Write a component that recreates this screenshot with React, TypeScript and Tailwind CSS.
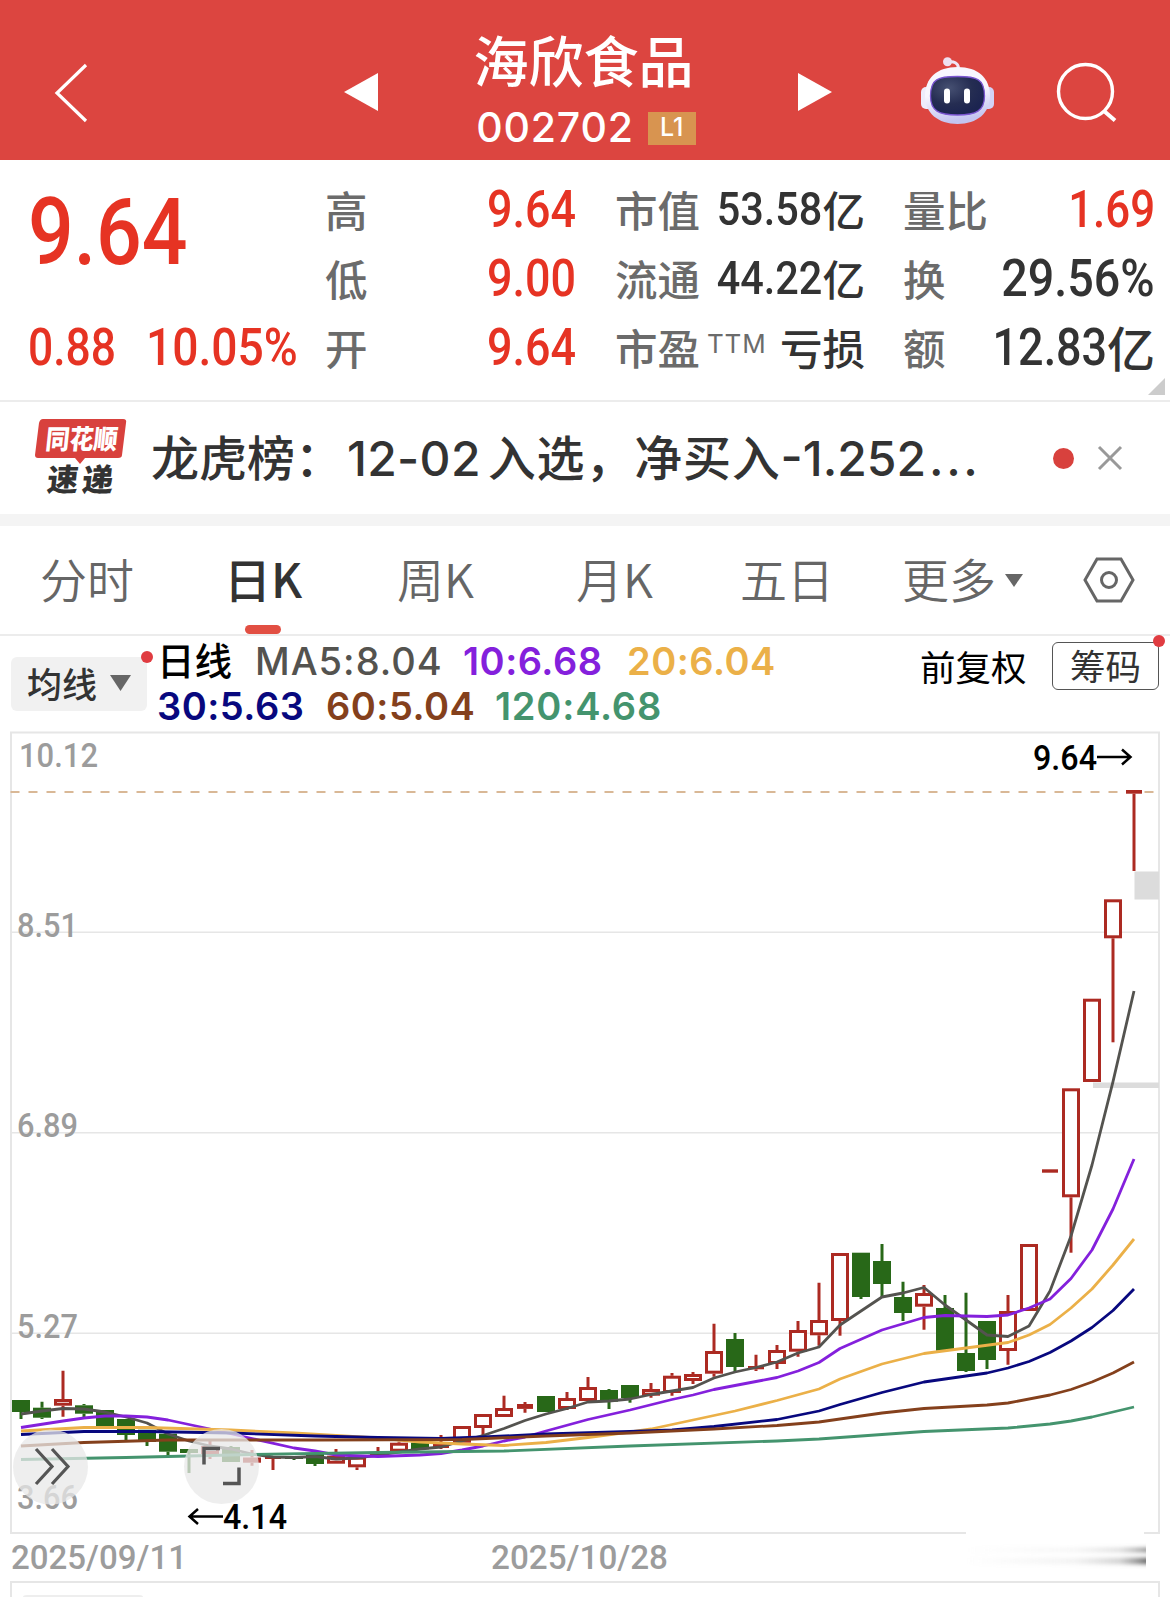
import type { ReactNode } from "react";

type Candle = [kind: "r" | "g", high: number, top: number, bottom: number, low: number];

const STEP = 21;

const candles: Candle[] = [
  ["g", 1400, 1400, 1412, 1419],
  ["g", 1401.7, 1407.7, 1417.7, 1419],
  ["r", 1370.7, 1399, 1405.7, 1416.7],
  ["g", 1404, 1405.3, 1413.7, 1417.7],
  ["g", 1410, 1410, 1429, 1429],
  ["g", 1419, 1419, 1435, 1440],
  ["g", 1429.7, 1429.7, 1442, 1446],
  ["g", 1433.7, 1433.7, 1451.7, 1455],
  ["g", 1449, 1449, 1453, 1473],
  ["r", 1441, 1446, 1454, 1459],
  ["g", 1446, 1447, 1462, 1462],
  ["r", 1450, 1457.5, 1462.7, 1465.7],
  ["r", 1456, 1456, 1459, 1470],
  ["g", 1456, 1456, 1459, 1460],
  ["g", 1454, 1454, 1464, 1466],
  ["r", 1449, 1455.7, 1463.7, 1463.7],
  ["r", 1456.7, 1456.7, 1467.3, 1470],
  ["r", 1447, 1452, 1455, 1455],
  ["r", 1441.7, 1442.7, 1451.7, 1451.7],
  ["g", 1442.7, 1442.7, 1449.3, 1449.3],
  ["r", 1435, 1444, 1448, 1449],
  ["r", 1426, 1426, 1442.7, 1442.7],
  ["r", 1414, 1414, 1428, 1435],
  ["r", 1395.7, 1408, 1417, 1417],
  ["r", 1402, 1404, 1408.9, 1412.7],
  ["g", 1396, 1396, 1412, 1412],
  ["r", 1392, 1398, 1409, 1410],
  ["r", 1377, 1387, 1401, 1401],
  ["g", 1389, 1390, 1401.7, 1409],
  ["g", 1385, 1385, 1398, 1402.7],
  ["r", 1383, 1389, 1395.7, 1397.7],
  ["r", 1373, 1375.7, 1393, 1395.7],
  ["r", 1372, 1374, 1381, 1384],
  ["r", 1323.7, 1351, 1373.7, 1376.7],
  ["g", 1333, 1339, 1367, 1371.7],
  ["r", 1354.7, 1366, 1369.3, 1371],
  ["r", 1345, 1350, 1364, 1369],
  ["r", 1321, 1330, 1351.7, 1356.7],
  ["r", 1282.7, 1320, 1335.3, 1345.7],
  ["r", 1253, 1253, 1321, 1335.7],
  ["g", 1252.7, 1252.7, 1297, 1299],
  ["g", 1244, 1261, 1284, 1297],
  ["g", 1281.7, 1297, 1313, 1321],
  ["r", 1285, 1293, 1306.7, 1329.7],
  ["g", 1295, 1308, 1350.7, 1350.7],
  ["g", 1292.7, 1353, 1371, 1372],
  ["g", 1321, 1321, 1360, 1369],
  ["r", 1295, 1311, 1351, 1364.7],
  ["r", 1244, 1244, 1311, 1311],
  ["r", 1169.3, 1169.3, 1172.7, 1172.7],
  ["r", 1088.3, 1088.3, 1197.3, 1252.7],
  ["r", 998.7, 998.7, 1082, 1082],
  ["r", 899.3, 899.3, 938.3, 1042.3],
  ["r", 790, 790, 793.7, 871],
];

const averages = [
  {
    color: "#54534f",
    points:
      "21,1414 42,1411 63,1408.5 84,1409 105,1412 126,1417 147,1423 168,1434 189,1441 210,1446 231,1449 252,1454 273,1457 294,1457.5 315,1456.5 336,1459 357,1458 378,1455 399,1452 420,1449 441,1447 462,1441 483,1435.5 504,1428.5 525,1420.5 546,1414 567,1408.5 588,1402 609,1401 630,1399 651,1394.5 672,1391 693,1387.5 714,1378 735,1372 756,1367.5 777,1362 798,1353 819,1347 840,1325 861,1311 882,1297 903,1293 924,1287.5 945,1305 966,1320 987,1335 1008,1336.5 1029,1326 1050,1291 1071,1236 1092,1165 1113,1081.7 1134,991",
  },
  {
    color: "#8420dc",
    points:
      "21,1427.5 63,1421 84,1418 105,1416 126,1416 147,1417 168,1420 210,1429 252,1438.5 294,1448 315,1451 336,1455 378,1456.5 420,1455 441,1453.5 462,1450 483,1446 504,1441 525,1437 546,1431 588,1419.5 630,1410 672,1399.5 693,1395 714,1389.5 756,1381.5 777,1377.5 798,1371 819,1362.5 840,1348.5 882,1330 924,1317.5 945,1315.5 987,1316.5 1008,1315 1029,1308 1050,1299 1071,1278.5 1092,1250 1113,1209 1134,1159",
  },
  {
    color: "#ebb048",
    points:
      "21,1431 84,1427.5 147,1427.5 231,1430 294,1433 378,1438 420,1442 462,1444 504,1445.5 546,1442.5 588,1437.5 630,1432 651,1429 693,1420 735,1411 777,1400.5 819,1389 840,1379 882,1364 924,1353.5 966,1348 1008,1342.5 1029,1335 1050,1324.5 1071,1308 1092,1289 1113,1265 1134,1239",
  },
  {
    color: "#08087e",
    points:
      "21,1434.5 84,1431.5 147,1431.5 231,1433 315,1436 378,1437.5 441,1438.5 483,1437 546,1434 630,1431.5 672,1430 714,1426.5 777,1419.5 819,1411 840,1404.5 882,1392.5 924,1382 966,1376 987,1373 1008,1368 1029,1361.5 1050,1352.5 1071,1341 1092,1327.5 1113,1310.5 1134,1289",
  },
  {
    color: "#84401c",
    points:
      "21,1446 84,1442.5 168,1440 315,1440 462,1439.5 546,1436 630,1433 714,1429 777,1425.5 819,1422 882,1413 924,1408.5 987,1405 1008,1403 1050,1395 1071,1389.5 1092,1382 1113,1373 1134,1362",
  },
  {
    color: "#44946e",
    points:
      "21,1459.5 126,1457.5 252,1454.5 378,1452.5 504,1451 630,1446 777,1441 819,1439 924,1431.5 1008,1428 1050,1424 1071,1421 1092,1417 1134,1407",
  },
];

// Roboto squeezed sideways, for the narrow quote digits
function Din({ className = "", children }: { className?: string; children: ReactNode }) {
  return (
    <span className={`inline-block whitespace-nowrap font-['Roboto','Noto_Sans_CJK_SC',sans-serif] font-medium ${className}`}>
      {children}
    </span>
  );
}

function Robot() {
  return (
    <svg width="75" height="72" viewBox="0 0 75 72" fill="none">
      <defs>
        <linearGradient id="shell" x1="0" y1="0" x2="0.2" y2="1">
          <stop offset="0.5" stopColor="#f8f6fe" />
          <stop offset="1" stopColor="#c3c4f0" />
        </linearGradient>
        <radialGradient id="face" cx="0.35" cy="0.3" r="0.7">
          <stop offset="0" stopColor="#465072" />
          <stop offset="0.6" stopColor="#252d52" />
          <stop offset="1" stopColor="#1c2450" />
        </radialGradient>
      </defs>
      <path d="M38.500 13C38 8 34 6 28 7" stroke="#efe5f6" strokeWidth="3" />
      <circle cx="27.500" cy="6.700" r="4.500" fill="#efe0f0" />
      <rect x="1" y="32" width="12" height="22" rx="5" fill="#eeecfb" />
      <rect x="62" y="32" width="12" height="22" rx="5" fill="#d3d2f6" />
      <path d="M37.500 12C58 12 70 23 70 41C70 58 57 69 37.500 69C18 69 5 58 5 41C5 23 17 12 37.500 12Z" fill="url(#shell)" />
      <path
        d="M37.500 21.500C57 21.500 64.500 24 64.500 41C64.500 56 56 60 37.500 60C19 60 10.500 56 10.500 41C10.500 24 18 21.500 37.500 21.500Z"
        fill="url(#face)"
        stroke="#7a55d0"
        strokeWidth="1.300"
      />
      <rect x="24" y="33.500" width="6" height="15" rx="3" fill="#fff" />
      <rect x="44" y="33.500" width="6" height="15" rx="3" fill="#fff" />
    </svg>
  );
}

function Header() {
  return (
    <header className="flex h-40 bg-[#dc4540] text-white">
      <div className="flex w-[340px] items-start pl-[54px] pt-[63px]">
        <svg width="34" height="60" viewBox="0 0 34 60" fill="none" stroke="#fff" strokeWidth="3.2">
          <path d="M32 2L3 30L32 58" />
        </svg>
      </div>
      <svg className="mt-[73px]" width="40" height="38" viewBox="0 0 40 38">
        <path d="M38 0V38L4 19Z" fill="#fff" />
      </svg>
      <div className="flex w-[412px] flex-col items-center pt-[18px]">
        <h1 className="mr-[5px] text-[55px] font-medium leading-[80px]">海欣食品</h1>
        <div className="mt-[3px] flex h-[52px] items-center gap-[14px]">
          <span className="font-['Inter',sans-serif] text-[41px] font-medium leading-[52px] tracking-[0.8px]">002702</span>
          <span className="mt-[2px] flex h-[33px] w-12 items-center justify-center bg-[#d89450] font-['Inter',sans-serif] text-[25px] font-medium">
            L1
          </span>
        </div>
      </div>
      <svg className="mt-[73px]" width="40" height="38" viewBox="0 0 40 38">
        <path d="M6 0V38L40 19Z" fill="#fff" />
      </svg>
      <div className="ml-[88px] mt-[55px]">
        <Robot />
      </div>
      <svg className="ml-[61px] mt-[61px]" width="62" height="62" viewBox="0 0 62 62" fill="none" stroke="#fff" strokeWidth="3.4">
        <circle cx="29.500" cy="30.500" r="27" />
        <path d="M48 50L59 59.500" strokeWidth="4" />
      </svg>
    </header>
  );
}

const quotes = [
  { a: "高", av: "9.64", b: "市值", bv: "53.58", unit: "亿", c: "量比", cv: "1.69", cu: "", cc: "scale-x-[0.86] text-[#e63323]" },
  { a: "低", av: "9.00", b: "流通", bv: "44.22", unit: "亿", c: "换", cv: "29.56%", cu: "", cc: "scale-x-[0.915]" },
  { a: "开", av: "9.64", b: "市盈", bv: "", unit: "亏损", c: "额", cv: "12.83", cu: "亿", cc: "scale-x-[0.88]" },
];

function QuotePanel() {
  return (
    <section className="relative flex h-[242px] border-b-2 border-[#ececec] text-[42.5px] text-[#333]">
      <div className="flex w-[325px] flex-col pl-7 text-[#e63323]">
        <Din className="mt-[20px] h-[104px] origin-left scale-x-[0.875] text-[92px] leading-[106px]">9.64</Din>
        <div className="mt-[34px] flex h-[60px] leading-[60px]">
          <Din className="w-[118px] origin-left scale-x-[0.87] text-[51px]">0.88</Din>
          <Din className="origin-left scale-x-[0.905] text-[51px]">10.05%</Din>
        </div>
      </div>
      <div className="flex-1 pt-[15px]">
        {quotes.map((q) => (
          <div key={q.a} className="flex h-[69px] items-center leading-[69px]">
            <span className="w-[80px] pb-[2px] font-medium text-[#6b6b6b]">{q.a}</span>
            <Din className="w-[171px] origin-right scale-x-[0.88] text-right text-[51px] text-[#e63323]">{q.av}</Din>
            <div className="ml-[39px] flex w-[250px] items-center justify-between">
              <span className="flex pb-[2px] font-medium text-[#6b6b6b]">
                {q.b}
                {!q.bv && (
                  <span className="ml-[7px] mt-[-3px] font-['Inter',sans-serif] text-[26px] font-normal tracking-[0.8px]">TTM</span>
                )}
              </span>
              <span className="flex items-center font-medium">
                {q.bv && <Din className="-ml-4 origin-right scale-x-[0.9] text-[46px]">{q.bv}</Din>}
                <span className="pb-[2px]">{q.unit}</span>
              </span>
            </div>
            <div className="ml-[38px] flex w-[252px] items-center justify-between">
              <span className="pb-[2px] font-medium text-[#6b6b6b]">{q.c}</span>
              <span className="flex items-center">
                <Din className={`origin-right text-[51px] ${q.cc}`}>{q.cv}</Din>
                {q.cu && <span className="pb-[2px] text-[48px] font-medium">{q.cu}</span>}
              </span>
            </div>
          </div>
        ))}
      </div>
      <svg className="absolute bottom-[5px] right-[5px]" width="17" height="17" viewBox="0 0 17 17">
        <path d="M17 0V17H0Z" fill="#ccc" />
      </svg>
    </section>
  );
}

function NewsBar() {
  return (
    <section className="flex h-28 items-center">
      <svg className="ml-[34px] overflow-visible" width="94" height="80" viewBox="0 0 94 80">
        <path d="M9 1H89Q93 1 92 5L88 37Q88 40 84 40H51L46 46L41 40H4Q1 40 1 37L5 5Q6 1 9 1Z" fill="#d8413d" />
        <text x="14" y="31" fontSize="27" fontWeight="900" fill="#fff" textLength="72" lengthAdjust="spacingAndGlyphs" transform="skewX(-6)">
          同花顺
        </text>
        <text x="20" y="73" fontSize="31" fontWeight="900" fill="#333" textLength="66" transform="skewX(-6)">
          速递
        </text>
      </svg>
      <p className="mb-[3px] ml-[23px] w-[840px] whitespace-nowrap text-[48px] font-medium leading-[70px] text-[#333]">
        龙虎榜：
        <span className="ml-[4px] mr-[7px] font-['Inter',sans-serif] tracking-[0.3px]">12-02</span>
        <span className="tracking-[0.8px]">入选，净买入</span>
        <span className="font-['Inter',sans-serif]">
          -1.252<span className="ml-[3px] tracking-[2.5px]">...</span>
        </span>
      </p>
      <span className="ml-[62px] h-[21px] w-[21px] rounded-full bg-[#d8413d]" />
      <svg className="ml-[23px]" width="26" height="26" viewBox="0 0 26 26" stroke="#999" strokeWidth="3">
        <path d="M2 2L24 24M24 2L2 24" />
      </svg>
    </section>
  );
}

function Tabs() {
  return (
    <nav className="relative flex h-[110px] items-center border-b-2 border-[#ececec] pb-1 text-[47px] font-[350] text-[#666]">
      <span className="w-[185px] pl-[40px]">分时</span>
      <span className="w-[212px] pl-[39px] font-medium text-[#333]">日K</span>
      <span className="w-[179px]">周K</span>
      <span className="w-[164px]">月K</span>
      <span className="w-[162px]">五日</span>
      <span className="w-[95px] whitespace-nowrap">更多</span>
      <svg className="ml-[8px] mt-1" width="18" height="13" viewBox="0 0 18 13">
        <path d="M0 0H18L9 13Z" fill="#666" />
      </svg>
      <svg className="ml-[60px] mt-[3px]" width="52" height="46" viewBox="0 0 52 46" fill="none" stroke="#666" strokeWidth="3">
        <path d="M14 2H38L50 23L38 44H14L2 23Z" />
        <circle cx="26" cy="23" r="7.500" />
      </svg>
      <span className="absolute bottom-0 left-[245px] h-[9px] w-9 rounded-full bg-[#e24f43]" />
    </nav>
  );
}

function AverageLegend() {
  return (
    <section className="flex h-[94px]">
      <div className="relative ml-[11px] mt-[21px] flex h-[54px] w-[136px] items-center rounded-md bg-[#f1f1f1] pb-[2px] pl-4 text-[35px] font-medium leading-[52px] text-[#333]">
        均线
        <svg className="ml-[13px]" width="21" height="16" viewBox="0 0 21 16">
          <path d="M0 0H21L10.500 16Z" fill="#666" />
        </svg>
        <span className="absolute -right-[6px] -top-[6px] h-3 w-3 rounded-full bg-[#e03c41]" />
      </div>
      <div className="ml-[10px] w-[763px] whitespace-nowrap pt-[3px] font-['Inter','Noto_Sans_CJK_SC',sans-serif] text-[38px] font-semibold tracking-[0.5px]">
        <div className="flex h-[45px] leading-[45px]">
          <span className="w-[98px] text-[37.5px] font-medium tracking-normal text-black">日线</span>
          <span className="w-[208px] font-medium tracking-[1px] text-[#54534f]">MA5:8.04</span>
          <span className="w-[164px] text-[#8420dc]">10:6.68</span>
          <span className="text-[#ebb048]">20:6.04</span>
        </div>
        <div className="flex h-[45px] leading-[45px]">
          <span className="w-[169px] text-[#08087e]">30:5.63</span>
          <span className="w-[169px] text-[#84401c]">60:5.04</span>
          <span className="tracking-[0.8px] text-[#44946e]">120:4.68</span>
        </div>
      </div>
      <span className="mt-[4px] w-[132px] text-[35.5px] leading-[52px] text-black">前复权</span>
      <div className="relative mt-[6px] flex h-12 w-[107px] items-center justify-center rounded-md border-[1.5px] border-[#555] pb-[3px] text-[35.5px] leading-[42px] text-[#333]">
        筹码
        <span className="absolute -right-[7px] -top-[8px] h-3 w-3 rounded-full bg-[#e03c41]" />
      </div>
    </section>
  );
}

function CandleChart() {
  return (
    <svg className="block" width="1170" height="867" viewBox="0 730 1170 867">
      <g fill="none" stroke="#e6e6e6" strokeWidth="2">
        <rect x="11" y="732.500" width="1148" height="800.500" />
        <path d="M11 932.300H1159M11 1132.700H1159M11 1333.300H1159" strokeWidth="1.600" />
        <path d="M11 1597V1582H1159V1597" />
      </g>
      <path d="M23 1597Q23 1595 27 1595H139Q143 1595 143 1597Z" fill="#eee" />
      <rect x="1134.500" y="871.500" width="24.500" height="28" fill="#dcdcdc" />
      <rect x="1093" y="1082.500" width="66" height="5.500" fill="#dcdcdc" />

      <g fontFamily="Roboto, sans-serif" fontSize="34" fontWeight="500" fill="#9c9c9c">
        <text x="19" y="767" textLength="79" lengthAdjust="spacingAndGlyphs">10.12</text>
        <text x="17" y="937" textLength="61" lengthAdjust="spacingAndGlyphs">8.51</text>
        <text x="17" y="1137" textLength="61" lengthAdjust="spacingAndGlyphs">6.89</text>
        <text x="17" y="1337.500" textLength="61" lengthAdjust="spacingAndGlyphs">5.27</text>
        <text x="17" y="1508.500" textLength="61" lengthAdjust="spacingAndGlyphs">3.66</text>
        <text x="11" y="1568.500" textLength="176" lengthAdjust="spacingAndGlyphs">2025/09/11</text>
        <text x="491" y="1568.500" textLength="177" lengthAdjust="spacingAndGlyphs">2025/10/28</text>
      </g>

      <path d="M10.500 792H1159" stroke="#d9b896" strokeWidth="1.800" strokeDasharray="9 9" />

      {candles.map(([kind, high, top, bottom, low], i) => {
        const x = STEP * (i + 1);
        const color = kind === "r" ? "#ac2a22" : "#286818";
        const flat = bottom - top < 5;
        return (
          <g key={i}>
            <path d={`M${x} ${high}V${top}M${x} ${bottom}V${low}`} stroke={color} strokeWidth="3" />
            {kind === "g" || flat ? (
              <rect x={kind === "g" ? x - 9 : x - 8} y={top} width={kind === "g" ? 18 : 16} height={bottom - top} fill={color} />
            ) : (
              <rect x={x - 7.5} y={top + 1.5} width="15" height={bottom - top - 3} fill="#fff" stroke={color} strokeWidth="3" />
            )}
          </g>
        );
      })}

      {averages.map((line) => (
        <polyline key={line.color} points={line.points} fill="none" stroke={line.color} strokeWidth="2.800" strokeLinejoin="round" />
      ))}

      <g fontFamily="Roboto, sans-serif" fontSize="35" fontWeight="500" fill="#000">
        <text x="1033" y="770" textLength="64" lengthAdjust="spacingAndGlyphs">9.64</text>
        <text x="223" y="1529" textLength="64" lengthAdjust="spacingAndGlyphs">4.14</text>
      </g>
      <g fill="none" stroke="#000" strokeWidth="2.500">
        <path d="M1097 757H1130M1122 749.500L1130.500 757L1122 764.500" />
        <path d="M223 1516.500H190M198 1509L189.500 1516.500L198 1524" />
      </g>

      {/* floating controls */}
      <g fill="#e8e8e8" fillOpacity="0.750">
        <circle cx="50.500" cy="1467" r="37.500" />
        <circle cx="221.500" cy="1466.500" r="37.500" />
      </g>
      <g fill="none" stroke="#555" strokeWidth="3.200">
        <path d="M36 1449L52 1466.500L36 1484M52 1449L68 1466.500L52 1484" />
        <path d="M204 1464.500V1448.500H220M239 1467.500V1483.500H223" strokeWidth="3.500" />
      </g>

      <defs>
        <linearGradient id="smear">
          <stop offset="0" stopColor="#aaa" stopOpacity="0" />
          <stop offset="0.600" stopColor="#aaa" stopOpacity="0.150" />
          <stop offset="0.850" stopColor="#999" stopOpacity="0.450" />
          <stop offset="1" stopColor="#666" stopOpacity="1" />
        </linearGradient>
        <filter id="soft" x="-5%" y="-100%" width="110%" height="300%">
          <feGaussianBlur stdDeviation="0 2" />
        </filter>
      </defs>
      <rect x="966" y="1531" width="178" height="44" fill="#fff" />
      <g fill="url(#smear)" filter="url(#soft)">
        <rect x="966" y="1548" width="180" height="4" opacity="0.800" />
        <rect x="966" y="1558" width="180" height="6" />
      </g>
    </svg>
  );
}

export default function App() {
  return (
    <div className="h-[1597px] w-[1170px] overflow-hidden bg-white font-['Noto_Sans_CJK_SC',sans-serif]">
      <Header />
      <QuotePanel />
      <NewsBar />
      <div className="h-3 bg-[#f4f4f4]" />
      <Tabs />
      <AverageLegend />
      <CandleChart />
    </div>
  );
}
